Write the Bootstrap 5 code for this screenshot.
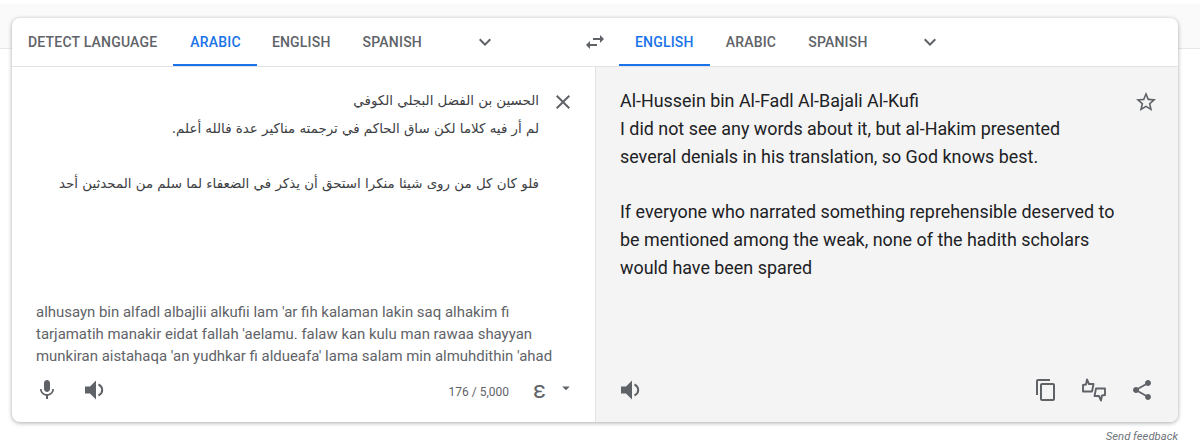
<!DOCTYPE html>
<html lang="en">
<head>
  <meta charset="UTF-8">
  <title>Translate</title>
  <link href="https://cdn.jsdelivr.net/npm/bootstrap@5.3.0/dist/css/bootstrap.min.css" rel="stylesheet">
  <style>
    body {
      font-family: Roboto, sans-serif;
      background: #fff;
      margin: 0;
      overflow: hidden;
    }

    .top-band {
      height: 45px;
      margin-top: 4px;
      background: #fafafa;
      border-bottom: 1px solid #e8e8e8;
    }

    .tr-wrap {
      width: 1166px;
      margin: -31px 0 0 12px;
    }

    .tr-card {
      height: 404px;
      border: 0;
      border-radius: 8px;
      box-shadow: 0 1px 4px rgba(60, 64, 67, .45);
      overflow: hidden;
    }

    .tr-head {
      height: 49px;
      border-bottom: 1px solid #e3e3e3;
    }

    .lang-tab {
      height: 48px;
      padding: 0 16px;
      font-size: 14px;
      font-weight: 500;
      letter-spacing: .2px;
      color: #5f6368;
      line-height: 48px;
      border-bottom: 2px solid transparent;
    }

    .lang-tab.is-on {
      color: #1a73e8;
      border-bottom-color: #1a73e8;
    }

    .lang-tab.first-on {
      padding-left: 17px;
      margin-right: -1px;
    }

    .tr-ico {
      fill: #5f6368;
      display: block;
      flex: none;
    }

    .chev-a {
      margin-left: 35px;
    }

    .swap-ico {
      margin: 0 12px 0 86px;
    }

    .chev-b {
      margin-left: 34px;
    }

    .tr-src {
      width: 584px;
      border-right: 1px solid #e3e3e3;
    }

    .tr-out {
      flex: 1;
      background: #f4f4f4;
    }

    .ar-text {
      font-family: "DejaVu Sans", sans-serif;
      font-size: 13.4px;
      line-height: 27.7px;
      color: #3c4043;
      width: 510px;
      margin-left: 17px;
      padding-top: 20px;
      white-space: pre-line;
    }

    .en-text {
      font-size: 17.9px;
      line-height: 27.8px;
      color: #202124;
      padding: 20px 0 0 24px;
      white-space: pre-line;
    }

    .top-ico {
      margin-top: 23px;
    }

    .clear-ico {
      margin-left: 12px;
    }

    .star-ico {
      margin-right: 20px;
    }

    .roman {
      font-size: 14.95px;
      line-height: 22px;
      color: #5f6368;
      padding-left: 24px;
      white-space: pre-line;
    }

    .tr-foot {
      height: 55px;
      padding: 11px 24px 0 23px;
    }

    .count {
      font-size: 12px;
      color: #5f6368;
      margin-top: 5px;
    }

    .ime {
      font-size: 24px;
      line-height: 24px;
      color: #5f6368;
      margin: 0 0 0 24px;
    }

    .caret-ico {
      margin: 1px -4px 0 11px;
    }

    .foot-gap {
      margin-left: 24px;
    }

    .thumbs {
      fill: none;
      stroke: #5f6368;
      stroke-width: 1.9;
      stroke-linejoin: round;
    }

    .speak-arc {
      fill: none;
      stroke: #5f6368;
      stroke-width: 2;
    }

    .feedback {
      font-size: 11.3px;
      font-style: italic;
      color: #70757a;
      margin-top: 7px;
    }
  </style>
</head>
<body>

<div class="top-band"></div>

<div class="tr-wrap">
  <div class="card tr-card">
    <!-- barra de idiomas -->
    <div class="d-flex align-items-center tr-head">
      <div class="lang-tab">DETECT LANGUAGE</div>
      <div class="lang-tab is-on first-on">ARABIC</div>
      <div class="lang-tab">ENGLISH</div>
      <div class="lang-tab">SPANISH</div>
      <svg class="tr-ico chev-a" width="24" height="24" viewBox="0 0 24 24"><path d="M7.41 8.59 12 13.17l4.59-4.58L18 10l-6 6-6-6z"/></svg>
      <svg class="tr-ico swap-ico" width="24" height="24" viewBox="0 0 24 24"><path d="M6.99 11 3 15l3.99 4v-3H14v-2H6.99v-3zM21 9l-3.99-4v3H10v2h7.01v3L21 9z"/></svg>
      <div class="lang-tab is-on">ENGLISH</div>
      <div class="lang-tab">ARABIC</div>
      <div class="lang-tab">SPANISH</div>
      <svg class="tr-ico chev-b" width="24" height="24" viewBox="0 0 24 24"><path d="M7.41 8.59 12 13.17l4.59-4.58L18 10l-6 6-6-6z"/></svg>
    </div>

    <div class="d-flex flex-grow-1">
      <!-- texto original -->
      <div class="tr-src d-flex flex-column">
        <div class="d-flex flex-grow-1">
          <div class="ar-text" dir="rtl">الحسين بن الفضل البجلي الكوفي
لم أر فيه كلاما لكن ساق الحاكم في ترجمته مناكير عدة فالله أعلم.

فلو كان كل من روى شيئا منكرا استحق أن يذكر في الضعفاء لما سلم من المحدثين أحد</div>
          <svg class="tr-ico top-ico clear-ico" width="24" height="24" viewBox="0 0 24 24"><path d="M19 6.41 17.59 5 12 10.59 6.41 5 5 6.41 10.59 12 5 17.59 6.41 19 12 13.41 17.59 19 19 17.59 13.41 12z"/></svg>
        </div>
        <div class="roman">alhusayn bin alfadl albajlii alkufii lam 'ar fih kalaman lakin saq alhakim fi
tarjamatih manakir eidat fallah 'aelamu. falaw kan kulu man rawaa shayyan
munkiran aistahaqa 'an yudhkar fi aldueafa' lama salam min almuhdithin 'ahad</div>
        <div class="d-flex align-items-start tr-foot">
          <svg class="tr-ico" width="24" height="24" viewBox="0 0 24 24"><path d="M12 14c1.66 0 3-1.34 3-3V5c0-1.66-1.34-3-3-3S9 3.34 9 5v6c0 1.66 1.34 3 3 3zm5.3-3c0 3-2.54 5.1-5.3 5.1S6.7 14 6.7 11H5c0 3.41 2.72 6.23 6 6.72V21h2v-3.28c3.28-.48 6-3.3 6-6.72h-1.7z"/></svg>
          <svg class="tr-ico foot-gap" width="24" height="24" viewBox="0 0 24 24"><path d="M2 8.500v7h5l6 6v-19l-6 6H2z"/><path class="speak-arc" d="M15.500 6.500c2.200 1.200 3.700 3 3.700 5.500s-1.500 4.300-3.700 5.500"/></svg>
          <span class="count ms-auto">176 / 5,000</span>
          <span class="ime">ε</span>
          <svg class="tr-ico caret-ico" width="18" height="18" viewBox="0 0 24 24"><path d="M7 10l5 5 5-5z"/></svg>
        </div>
      </div>
      <!-- traduccion -->
      <div class="tr-out d-flex flex-column">
        <div class="d-flex flex-grow-1">
          <div class="en-text flex-grow-1">Al-Hussein bin Al-Fadl Al-Bajali Al-Kufi
I did not see any words about it, but al-Hakim presented
several denials in his translation, so God knows best.

If everyone who narrated something reprehensible deserved to
be mentioned among the weak, none of the hadith scholars
would have been spared</div>
          <svg class="tr-ico top-ico star-ico" width="24" height="24" viewBox="0 0 24 24"><path d="m22 9.24-7.19-.62L12 2 9.19 8.63 2 9.24l5.46 4.73L5.82 21 12 17.27 18.18 21l-1.63-7.03L22 9.24zM12 15.4l-3.76 2.27 1-4.28-3.32-2.88 4.38-.38L12 6.1l1.71 4.04 4.38.38-3.32 2.88 1 4.28L12 15.4z"/></svg>
        </div>
        <div class="d-flex align-items-start tr-foot">
          <svg class="tr-ico" width="24" height="24" viewBox="0 0 24 24"><path d="M2 8.500v7h5l6 6v-19l-6 6H2z"/><path class="speak-arc" d="M15.500 6.500c2.200 1.200 3.700 3 3.700 5.500s-1.500 4.300-3.700 5.500"/></svg>
          <svg class="tr-ico ms-auto" width="24" height="24" viewBox="0 0 24 24"><path d="M16 1H4c-1.100 0-2 .9-2 2v14h2V3h12V1zm3 4H8c-1.100 0-2 .9-2 2v14c0 1.100.9 2 2 2h11c1.100 0 2-.9 2-2V7c0-1.100-.9-2-2-2zm0 16H8V7h11v14z"/></svg>
          <svg class="tr-ico thumbs foot-gap" width="24" height="24" viewBox="0 0 24 24"><path d="M1 13.500V7l3-.5 1-5 2 4.500h4.500L10 13.500z"/><path d="M23 10.500V17l-3 .5-1 5-2-4.500h-4.500l1.500-7.500z"/></svg>
          <svg class="tr-ico foot-gap" width="24" height="24" viewBox="0 0 24 24"><path d="M18 16.080c-.76 0-1.440.3-1.960.77L8.910 12.700c.05-.23.09-.46.09-.7s-.04-.47-.09-.7l7.050-4.110c.54.5 1.250.81 2.040.81 1.660 0 3-1.340 3-3s-1.340-3-3-3-3 1.340-3 3c0 .24.04.47.09.7L8.040 9.810C7.500 9.310 6.790 9 6 9c-1.660 0-3 1.340-3 3s1.340 3 3 3c.79 0 1.500-.31 2.040-.81l7.120 4.160c-.05.21-.08.43-.08.65 0 1.610 1.310 2.920 2.920 2.920s2.920-1.310 2.920-2.920-1.310-2.920-2.920-2.920z"/></svg>
        </div>
      </div>
    </div>
  </div>
  <div class="feedback text-end">Send feedback</div>
</div>

<script src="https://cdn.jsdelivr.net/npm/bootstrap@5.3.0/dist/js/bootstrap.bundle.min.js"></script>
</body>
</html>
